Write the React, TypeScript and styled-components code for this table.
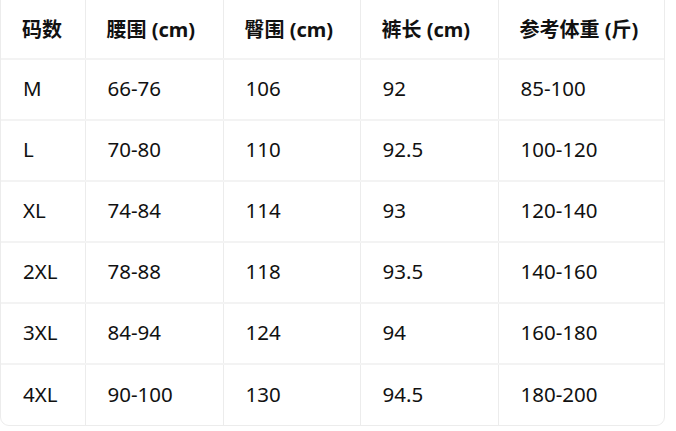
import styled, { createGlobalStyle } from 'styled-components';

const GlobalStyle = createGlobalStyle`
  html, body {
    margin: 0;
    padding: 0;
    background: #ffffff;
  }
  body {
    font-family: "Noto Sans", "Noto Sans CJK SC", sans-serif;
    color: #111111;
  }
  *, *::before, *::after {
    box-sizing: border-box;
  }
`;

const Wrapper = styled.div`
  width: 665px;
  margin-top: -1px;
  border: 1px solid #ececec;
  border-radius: 0 0 9px 9px;
  overflow: hidden;
  background: #ffffff;
`;

const Table = styled.table`
  width: 100%;
  border-collapse: collapse;
  table-layout: fixed;
`;

const HeadCell = styled.th<{ $w: number }>`
  width: ${(p) => p.$w}px;
  height: 59px;
  padding: 0 0 1px 21px;
  text-align: left;
  font-size: 20px;
  font-weight: 700;
  color: #111111;
  white-space: nowrap;
  border-right: 1px solid #ececec;
  border-bottom: 2px solid #f3f3f3;
  &:last-child {
    border-right: none;
  }
`;

const Row = styled.tr`
  &:not(:last-child) td {
    border-bottom: 2px solid #f3f3f3;
  }
`;

const Cell = styled.td`
  height: 61px;
  padding: 0 0 3px 22px;
  font-size: 20.5px;
  font-weight: 400;
  color: #111111;
  white-space: nowrap;
  border-right: 1px solid #ececec;
  &:last-child {
    border-right: none;
  }
`;

const columns = [
  { label: '码数', w: 84 },
  { label: '腰围 (cm)', w: 138 },
  { label: '臀围 (cm)', w: 137 },
  { label: '裤长 (cm)', w: 138 },
  { label: '参考体重 (斤)', w: 166 },
];

const rows = [
  ['M', '66-76', '106', '92', '85-100'],
  ['L', '70-80', '110', '92.5', '100-120'],
  ['XL', '74-84', '114', '93', '120-140'],
  ['2XL', '78-88', '118', '93.5', '140-160'],
  ['3XL', '84-94', '124', '94', '160-180'],
  ['4XL', '90-100', '130', '94.5', '180-200'],
];

export default function App() {
  return (
    <>
      <GlobalStyle />
      <Wrapper>
        <Table>
          <thead>
            <tr>
              {columns.map((c) => (
                <HeadCell key={c.label} $w={c.w}>
                  {c.label}
                </HeadCell>
              ))}
            </tr>
          </thead>
          <tbody>
            {rows.map((r) => (
              <Row key={r[0]}>
                {r.map((v, i) => (
                  <Cell key={i}>{v}</Cell>
                ))}
              </Row>
            ))}
          </tbody>
        </Table>
      </Wrapper>
    </>
  );
}
